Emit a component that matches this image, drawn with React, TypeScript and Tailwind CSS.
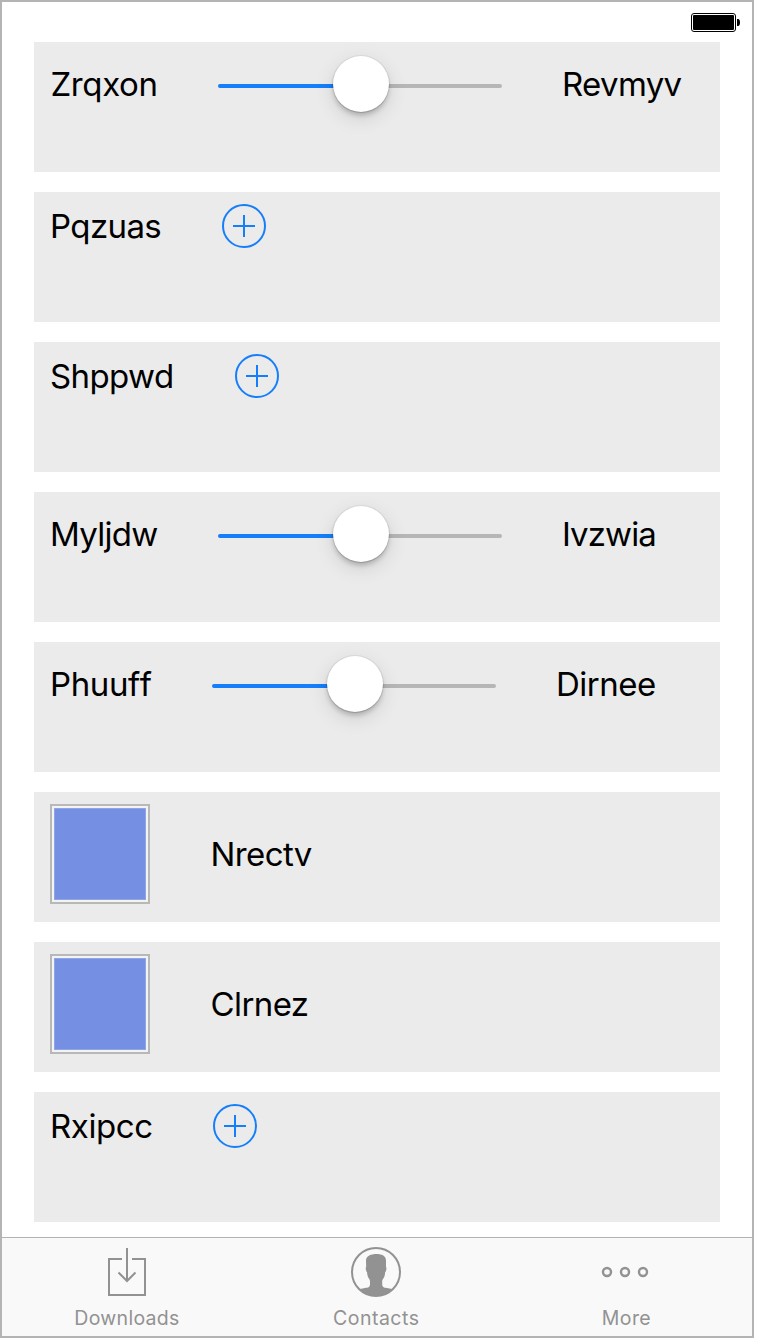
import type { ReactNode } from "react";

function Panel({ children, className }: { children: ReactNode; className: string }) {
  return (
    <section className={`flex h-[130px] items-start gap-[60px] bg-[#ebebeb] pl-4 text-[33px] leading-[60px] whitespace-nowrap text-black ${className}`}>
      {children}
    </section>
  );
}

function Slider() {
  return (
    <div className="flex h-[60px] w-[284px] items-center">
      <div className="mt-1 h-1 w-[116px] rounded-l-full bg-[#157efb]" />
      <div className="relative -mx-px size-14 shrink-0 rounded-full bg-white shadow-[0_0_0_1px_rgba(0,0,0,0.06),0_1px_1px_rgba(0,0,0,0.12),0_4px_4px_rgba(0,0,0,0.17),0_6px_20px_rgba(0,0,0,0.12)]" />
      <div className="mt-1 h-1 flex-1 rounded-r-full bg-[#b6b6b6]" />
    </div>
  );
}

function AddButton() {
  return (
    <button className="flex h-[60px] w-11 items-center" aria-label="Add">
      <svg width="44" height="44" viewBox="0 0 44 44" fill="none" stroke="#157efb" strokeWidth="2">
        <circle cx="22" cy="22" r="21" />
        <path d="M11 22h22M22 11v22" />
      </svg>
    </button>
  );
}

function SliderPanel({ label, value, labelClass, valueClass }: { label: string; value: string; labelClass: string; valueClass: string }) {
  return (
    <Panel className="pt-3">
      <span className={labelClass}>{label}</span>
      <Slider />
      <span className={valueClass}>{value}</span>
    </Panel>
  );
}

function AddPanel({ label, labelClass }: { label: string; labelClass: string }) {
  return (
    <Panel className="pt-1">
      <span className={labelClass}>{label}</span>
      <AddButton />
    </Panel>
  );
}

function SwatchPanel({ label, labelClass }: { label: string; labelClass: string }) {
  return (
    <Panel className="pt-3">
      <div className="size-[100px] border-2 border-[#b8b8b8] bg-[#f3f3f3] p-[2px]">
        <div className="size-full border border-[#90a4e8] bg-[#758fe2]" />
      </div>
      <span className={`mt-5 ${labelClass}`}>{label}</span>
    </Panel>
  );
}

function Tab({ label, labelClass, children }: { label: string; labelClass: string; children: ReactNode }) {
  return (
    <button className="flex flex-col items-center pt-2">
      <span className="flex h-[52px] items-center">{children}</span>
      <span className={`mt-2 text-[19.5px] leading-6 ${labelClass}`}>{label}</span>
    </button>
  );
}

export default function App() {
  return (
    <div className="h-[1340px] w-[760px] overflow-hidden bg-white font-['Inter',sans-serif]">
      <main className="flex h-[1338px] w-[754px] flex-col border-2 border-[#b4b4b4] bg-white">
        <header className="flex h-10 shrink-0 justify-end pt-[11px] pr-3">
          <svg width="49" height="19" viewBox="0 0 49 19" fill="none">
            <rect x="0.5" y="0.5" width="44" height="18" rx="2.5" stroke="#000" />
            <rect x="2" y="2" width="41" height="15" rx="1" fill="#000" />
            <path d="M46 6h1.2c1.1 0 1.8 1.4 1.8 3.5S48.300 13 47.200 13H46z" fill="#000" />
          </svg>
        </header>
        <div className="flex h-[1195px] shrink-0 flex-col gap-5 pr-8 pl-8">
          <SliderPanel label="Zrqxon" value="Revmyv" labelClass="w-[108px] pl-[0.5px] tracking-[-0.4px]" valueClass="tracking-[-0.65px]" />
          <AddPanel label="Pqzuas" labelClass="w-[112px] tracking-[-0.6px]" />
          <AddPanel label="Shppwd" labelClass="w-[125px] tracking-[-0.6px]" />
          <SliderPanel label="Myljdw" value="Ivzwia" labelClass="w-[108px] tracking-[-0.7px]" valueClass="tracking-[-0.9px]" />
          <SliderPanel label="Phuuff" value="Dirnee" labelClass="w-[102px] tracking-[-0.4px] [font-kerning:none]" valueClass="tracking-[-0.5px]" />
          <SwatchPanel label="Nrectv" labelClass="pl-[0.5px] tracking-[-0.6px]" />
          <SwatchPanel label="Clrnez" labelClass="pl-[0.5px] tracking-[-0.6px]" />
          <AddPanel label="Rxipcc" labelClass="w-[103px] tracking-[-0.4px]" />
        </div>
        <nav className="grid flex-1 grid-cols-[250px_248px_250px] border-t border-[#b2b2b2] bg-[#f9f9f9] text-[#929292]">
          <Tab label="Downloads" labelClass="tracking-[0.3px]">
            <svg width="38" height="52" viewBox="0 0 38 52" fill="none" stroke="currentColor" strokeWidth="2">
              <path d="M14 13H1v36h36V13H24M19 2v33M10.500 26.500l8.500 8.500 8.500-8.500" />
            </svg>
          </Tab>
          <Tab label="Contacts" labelClass="pl-[0.5px] tracking-[0.5px]">
            <svg width="50" height="52" viewBox="0 0 50 52" fill="none">
              <circle cx="25" cy="26" r="24" stroke="currentColor" strokeWidth="2" />
              <path fill="currentColor" d="M15 14.500C15 10 20 8 25.500 8S35 10 35 14.500V21c.8.3.5 4.500-.8 5-.2 2.500-.6 4.500-1.500 6-.9 1.200-1.500 2-1.500 3.500V38c0 3 1.500 3.700 4.800 4l5 1C37 47.500 32 50 25 50S13 47.500 9 43l5-1c3.500-.3 5-1 5-4v-2.500c0-1.500-.6-2.300-1.500-3.500-.8-1.500-1.300-3.500-1.500-6-1.300-.5-1.600-4.700-.8-5z" />
            </svg>
          </Tab>
          <Tab label="More" labelClass="tracking-[0.4px] pl-[3px]">
            <svg width="48" height="12" viewBox="0 0 48 12" fill="none" stroke="currentColor" strokeWidth="2.400">
              <circle cx="6" cy="6" r="4" />
              <circle cx="24" cy="6" r="4" />
              <circle cx="42" cy="6" r="4" />
            </svg>
          </Tab>
        </nav>
      </main>
    </div>
  );
}
